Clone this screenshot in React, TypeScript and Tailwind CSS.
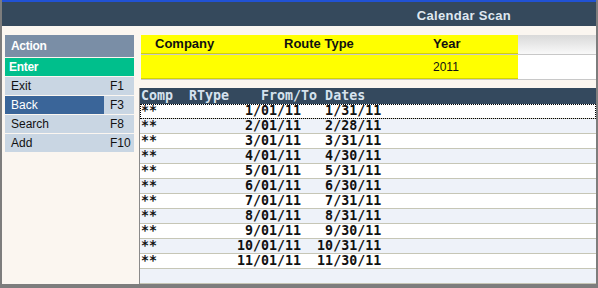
import React from 'react';

const menu = [
  { label: 'Exit', key: 'F1' },
  { label: 'Back', key: 'F3', active: true },
  { label: 'Search', key: 'F8' },
  { label: 'Add', key: 'F10' },
];

const rows = [
  ['1/01/11', '1/31/11'],
  ['2/01/11', '2/28/11'],
  ['3/01/11', '3/31/11'],
  ['4/01/11', '4/30/11'],
  ['5/01/11', '5/31/11'],
  ['6/01/11', '6/30/11'],
  ['7/01/11', '7/31/11'],
  ['8/01/11', '8/31/11'],
  ['9/01/11', '9/30/11'],
  ['10/01/11', '10/31/11'],
  ['11/01/11', '11/30/11'],
];

const sans = { fontFamily: '"Liberation Sans", Arial, sans-serif' };
const mono = { fontFamily: '"DejaVu Sans Mono", monospace' };

export default function App() {
  return (
    <div className="h-[288px] w-[598px] overflow-hidden bg-[#7d7d7d] pl-[2px] pr-[2px] pb-[4px]" style={sans}>
      <div className="flex h-[284px] flex-col bg-[#fbf6f0]">
        {/* title bar */}
        <div className="h-[2px] bg-[#2152d4]" />
        <div className="flex h-[24px] items-center justify-end bg-[#35495c] pr-[85px] pt-[3px]">
          <span className="text-[13px] font-bold tracking-[0.3px] text-[#dfe8f0]">Calendar Scan</span>
        </div>

        <div className="flex flex-1">
          {/* action panel */}
          <aside className="w-[137px] shrink-0 pl-[3px] pt-[9px]">
            <div className="w-[129px]">
              <div className="flex h-[22px] items-center bg-[#7a8ea6] pl-[6px] text-[12px] font-bold tracking-[-0.3px] text-white">Action</div>
              <div className="mt-px flex h-[18px] items-center bg-[#00bf8c] pl-[4px] text-[12px] font-bold tracking-[-0.3px] text-white">Enter</div>
              {menu.map((m) => (
                <div key={m.label} className="mt-px flex h-[18px] bg-[#c9d6e3] text-[12px]">
                  <div className={`flex w-[99px] items-center pl-[6px] ${m.active ? 'bg-[#3a6599] text-white' : 'text-[#111]'}`}>
                    {m.label}
                  </div>
                  <div className="flex items-center pl-[6px] text-[#111]">{m.key}</div>
                </div>
              ))}
            </div>
          </aside>

          <main className="flex flex-1 flex-col">
            {/* selection fields */}
            <div className="pl-[2px] pt-[9px] pb-[8px]">
              <div className="flex h-[20px] border-b border-[#c8c8c8] bg-gradient-to-b from-[#d9d9d9] to-[#f9f9f9] text-[13px] font-bold text-[#111]">
                <div className="flex w-[377px] items-center border-b border-[#d4d400] bg-[#ffff00]">
                  <div className="w-[129px] pl-[14px]">Company</div>
                  <div className="w-[149px] pl-[14px]">Route Type</div>
                  <div className="pl-[14px]">Year</div>
                </div>
              </div>
              <div className="flex h-[25px] border-b border-[#c8c8c8] bg-white text-[12px] text-[#111]">
                <div className="flex w-[377px] items-center border-b border-[#d4d400] bg-[#ffff00] pt-[1px]">
                  <div className="w-[129px]" />
                  <div className="w-[149px]" />
                  <div className="pl-[14px]">2011</div>
                </div>
              </div>
            </div>

            {/* date list */}
            <div className="flex flex-1 flex-col border-l border-[#8a8a8a]" style={mono}>
              <div className="flex h-[16px] items-center whitespace-pre bg-[#34495e] pl-[1px] text-[13.3px] font-bold leading-none text-[#d6e2ee]">
                {'Comp  RType    From/To Dates'}
              </div>
              {rows.map(([from, to], i) => (
                <div
                  key={from}
                  className={`flex h-[15px] items-center whitespace-pre border-b border-[#c6c6b6] pl-[1px] text-[13.3px] font-bold leading-none text-[#111] ${
                    i % 2 === 1 ? 'bg-[#eef2f9]' : 'bg-white'
                  } ${i === 0 ? 'outline-1 -outline-offset-1 outline-dotted outline-black' : ''}`}
                >
                  {'**' + ' '.repeat(10) + from.padStart(8, ' ') + '  ' + to.padStart(8, ' ')}
                </div>
              ))}
              <div className="h-[15px] border-b border-[#c6c6b6] bg-[#eef2f9]" />
            </div>
          </main>
        </div>
      </div>
    </div>
  );
}
